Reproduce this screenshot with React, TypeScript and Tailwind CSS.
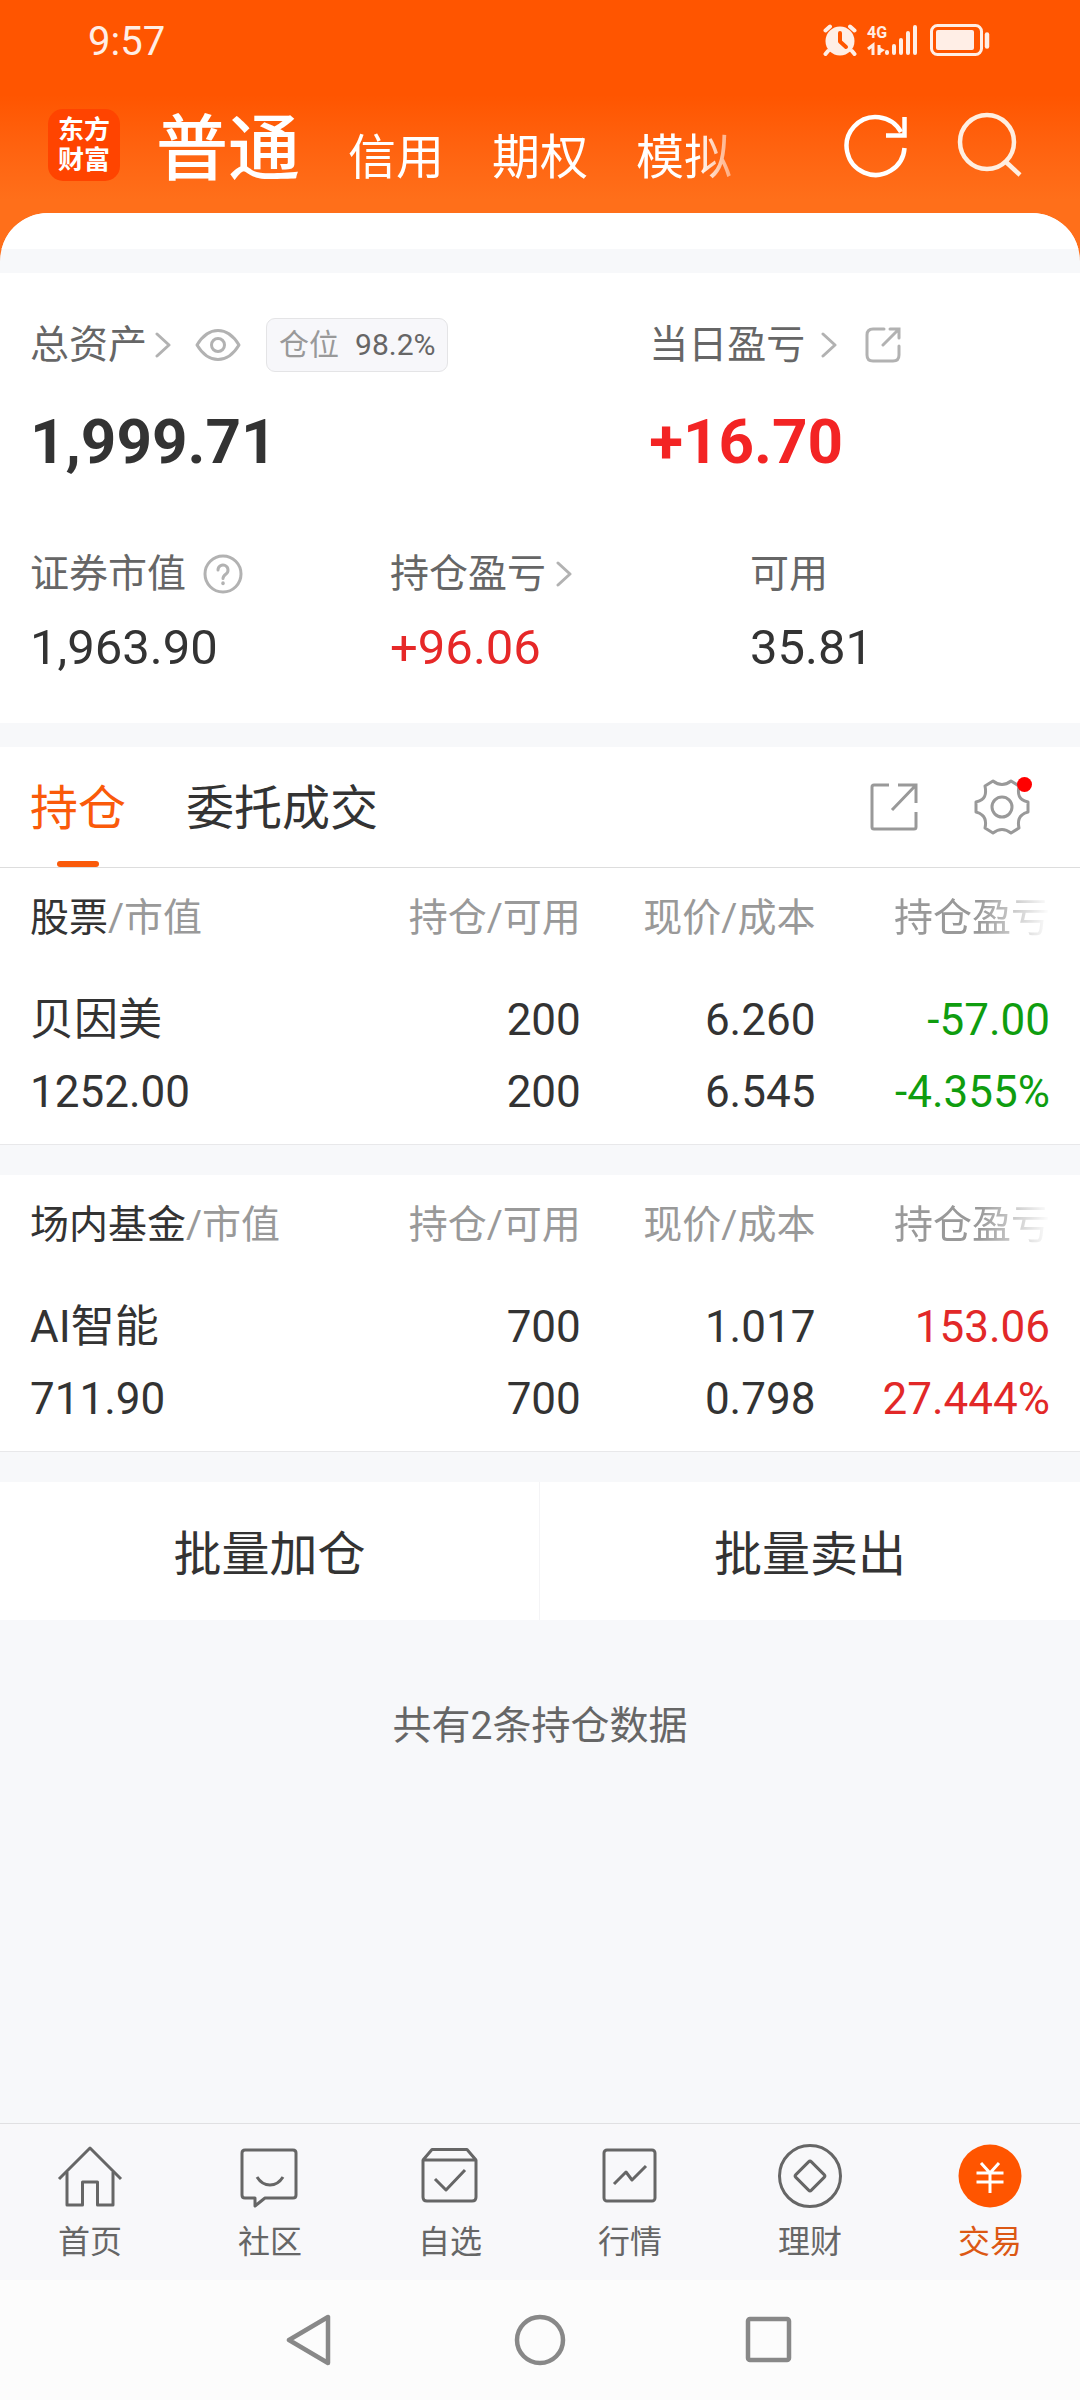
import type { ReactNode } from "react";

type Holding = {
  kind: string;
  name: string;
  value: string;
  amount: string;
  usable: string;
  price: string;
  cost: string;
  profit: string;
  rate: string;
  tone: "up" | "down";
};

const HOLDINGS: Holding[] = [
  {
    kind: "股票",
    name: "贝因美",
    value: "1252.00",
    amount: "200",
    usable: "200",
    price: "6.260",
    cost: "6.545",
    profit: "-57.00",
    rate: "-4.355%",
    tone: "down",
  },
  {
    kind: "场内基金",
    name: "AI智能",
    value: "711.90",
    amount: "700",
    usable: "700",
    price: "1.017",
    cost: "0.798",
    profit: "153.06",
    rate: "27.444%",
    tone: "up",
  },
];

const TONE = { up: "text-[#e22828]", down: "text-[#0f9d0f]" };

function StatusBar() {
  return (
    <div className="flex h-20 items-center justify-between pr-[90px] pl-[88px] text-[#ffeee6]">
      <span className="pt-1 text-[40px] leading-[48px]">9:57</span>
      <svg width="168" height="32" viewBox="0 0 168 32" fill="none" stroke="currentColor">
        {/* alarm */}
        <circle cx="18" cy="17" r="14.5" fill="currentColor" stroke="none" />
        <path d="M3.5 6.5 8 2.5M32.5 6.5 28 2.5M6 27l-2.5 3M30 27l2.5 3" strokeWidth="4" strokeLinecap="round" />
        <path d="M18 9v8.5l6 5.5" stroke="#ff5500" strokeWidth="4" strokeLinecap="round" strokeLinejoin="round" />
        {/* network */}
        <text x="45" y="14" fill="currentColor" stroke="none" fontSize="16" fontWeight="700">
          4G
        </text>
        <path d="M46 25l5-4v10M57 21v10" strokeWidth="3" />
        <path d="M57 23l6 3-6 4z" fill="currentColor" stroke="none" />
        <path d="M65 28v1M72 22v7M79 16v13M86 9v20M93 3v26" strokeWidth="4" strokeLinecap="round" />
        {/* battery */}
        <rect x="109.5" y="1.5" width="50" height="29" rx="6" strokeWidth="3" />
        <rect x="114" y="6" width="38" height="20" rx="2" fill="currentColor" stroke="none" />
        <path d="M165 10.5v12" strokeWidth="4.5" strokeLinecap="round" />
      </svg>
    </div>
  );
}

function Header() {
  return (
    <div className="flex h-[133px] items-start pr-[57px] pl-12 text-white">
      <div className="mt-[29px] flex h-[72px] w-[72px] flex-col items-center justify-center rounded-[15px] bg-[#ff4400] text-[26px] leading-[30px] font-bold">
        <span>东方</span>
        <span>财富</span>
      </div>
      <nav className="ml-9 flex w-[603px] items-baseline gap-12 overflow-hidden pt-1.5 text-[48px] leading-[66px] whitespace-nowrap [mask-image:linear-gradient(to_right,#000_541px,transparent_603px)]">
        <button className="mt-3 text-[72px] leading-[104px] font-medium">普通</button>
        <button>信用</button>
        <button>期权</button>
        <button>模拟</button>
      </nav>
      <div className="mt-8 ml-auto flex gap-12">
        <button aria-label="刷新">
          <svg width="66" height="66" viewBox="0 0 66 66" fill="none" stroke="currentColor" strokeWidth="4.5">
            <path d="M61.5 36A29 29 0 1 1 58 20" />
            <path d="M61.5 5v18.5H43" />
          </svg>
        </button>
        <button aria-label="搜索">
          <svg width="66" height="66" viewBox="0 0 66 66" fill="none" stroke="#ffeee0" strokeWidth="4.5">
            <circle cx="30" cy="30" r="27" />
            <path d="M49 50l14 13" />
          </svg>
        </button>
      </div>
    </div>
  );
}

function Chevron() {
  return (
    <svg width="16" height="26" viewBox="0 0 16 26" fill="none" stroke="#b2b2b2" strokeWidth="3" strokeLinecap="round" strokeLinejoin="round">
      <path d="M2 2l12 11L2 24" />
    </svg>
  );
}

function Metric({ label, value, tone, children }: { label: string; value: string; tone?: string; children?: ReactNode }) {
  return (
    <div>
      <div className="flex h-12 items-center text-[39px] leading-[48px] text-[#666]">
        {label}
        {children}
      </div>
      <div className={`mt-[18px] text-[49px] leading-[64px] ${tone ?? "text-[#333]"}`}>{value}</div>
    </div>
  );
}

function Assets() {
  return (
    <section className="bg-white px-[30px] py-[43px]">
      <div className="flex">
        <div className="w-[607px] grow-0 basis-[60.7%]">
          <div className="flex h-[58px] items-center text-[39px] leading-[48px] text-[#666]">
            总资产
            <span className="ml-2">
              <Chevron />
            </span>
            <button aria-label="隐藏金额" className="ml-6">
              <svg width="46" height="32" viewBox="0 0 46 32" fill="none" stroke="#b2b2b2" strokeWidth="3">
                <path d="M2 16C8 6 15 1.5 23 1.5S38 6 44 16C38 26 31 30.5 23 30.5S8 26 2 16z" strokeLinejoin="round" />
                <circle cx="23" cy="16" r="6.5" />
              </svg>
            </button>
            <span className="ml-[25px] flex h-[54px] items-center gap-4 rounded-[9px] border border-[#e4e4e6] bg-[#f7f7fa] px-3 text-[30px] leading-[40px]">
              <span className="text-[#999]">仓位</span>
              <span>98.2%</span>
            </span>
          </div>
          <div className="mt-8 text-[62px] leading-[72px] font-bold text-[#333]">1,999.71</div>
        </div>
        <div>
          <div className="flex h-[58px] items-center text-[39px] leading-[48px] text-[#666]">
            当日盈亏
            <span className="ml-4">
              <Chevron />
            </span>
            <button aria-label="分享当日盈亏" className="ml-7">
              <svg width="36" height="36" viewBox="0 0 36 36" fill="none" stroke="#b2b2b2" strokeWidth="3" strokeLinecap="round">
                <path d="M19 2H8Q2 2 2 8v20q0 6 6 6h20q6 0 6-6V19" />
                <path d="M25 2h9v9M34 2 18 18" />
              </svg>
            </button>
          </div>
          <div className="mt-8 text-[62px] leading-[72px] font-bold text-[#f32424]">+16.70</div>
        </div>
      </div>

      <div className="mt-[72px] grid grid-cols-[360px_360px_1fr]">
        <Metric label="证券市值" value="1,963.90">
          <svg className="ml-[17px]" width="40" height="40" viewBox="0 0 40 40" fill="none" stroke="#b2b2b2" strokeWidth="3" strokeLinecap="round">
            <circle cx="20" cy="20" r="18" />
            <path d="M15 16a5 5 0 1 1 8 4c-2 1.4-3 2.5-3 4.5" />
            <path d="M20 29v.5" strokeWidth="3.5" />
          </svg>
        </Metric>
        <Metric label="持仓盈亏" value="+96.06" tone="text-[#e62828]">
          <span className="ml-2.5">
            <Chevron />
          </span>
        </Metric>
        <Metric label="可用" value="35.81" />
      </div>
    </section>
  );
}

function Tabs() {
  return (
    <div className="flex h-[121px] items-center border-b border-[#ddd] bg-white pr-[50px] pl-[30px] text-[48px] text-[#333]">
      <button className="relative h-full pt-1 text-[#fa5a0a]">
        持仓
        <span className="absolute bottom-0 left-1/2 h-1.5 w-[42px] -translate-x-1/2 rounded-full bg-[#fa5a0a]" />
      </button>
      <button className="ml-[60px] h-full pt-1">委托成交</button>
      <button aria-label="分享持仓" className="ml-auto">
        <svg width="48" height="48" viewBox="0 0 48 48" fill="none" stroke="#999" strokeWidth="3">
          <path d="M19 2H4Q2 2 2 4v40q0 2 2 2h40q2 0 2-2V29" />
          <path d="M28 2h18v18M46 2 22 27" />
        </svg>
      </button>
      <button aria-label="设置" className="relative ml-[56px]">
        <svg width="56" height="56" viewBox="0 0 56 56" fill="none" stroke="#999" strokeWidth="3" strokeLinejoin="round">
          <path d="M19 2Q28 9 37 2L45 7Q43 17 48 20.5Q50 22 54 23V33Q50 34 48 36Q43 40 45 49L37 54Q28 47 19 54L11 49Q13 40 8 36Q6 34 2 33V23Q6 22 8 20.5Q13 17 11 7z" />
          <circle cx="28" cy="28" r="10" />
        </svg>
        <span className="absolute -top-0.5 -right-0.5 h-[15px] w-[15px] rounded-full bg-[#ff0000]" />
      </button>
    </div>
  );
}

function HoldingTable({ item }: { item: Holding }) {
  return (
    <div className="border-b border-[#e8e8ea] bg-white px-[30px]">
      <table className="w-full table-fixed text-right text-[44px] leading-[72px] text-[#333]">
        <thead>
          <tr className="h-[98px] text-[39px] leading-[48px] text-[#999]">
            <th className="pt-0.5 text-left font-normal">
              <span className="text-[#333]">{item.kind}</span>/市值
            </th>
            <th className="w-[23%] pt-0.5 font-normal">持仓/可用</th>
            <th className="w-[23%] pt-0.5 font-normal">现价/成本</th>
            <th className="w-[23%] pt-0.5 font-normal [mask-image:linear-gradient(to_right,#000_70%,transparent)]">持仓盈亏</th>
          </tr>
        </thead>
        <tbody>
          <tr>
            <td className="pt-[18px] pb-4 text-left">
              <div>{item.name}</div>
              <div>{item.value}</div>
            </td>
            <td className="pt-[18px] pb-4">
              <div>{item.amount}</div>
              <div>{item.usable}</div>
            </td>
            <td className="pt-[18px] pb-4">
              <div>{item.price}</div>
              <div>{item.cost}</div>
            </td>
            <td className={`pt-[18px] pb-4 ${TONE[item.tone]}`}>
              <div>{item.profit}</div>
              <div>{item.rate}</div>
            </td>
          </tr>
        </tbody>
      </table>
    </div>
  );
}

const NAV: { label: string; icon: ReactNode }[] = [
  {
    label: "首页",
    icon: (
      <>
        <path d="M2 34 33 3l31 31" />
        <path d="M10 27v33h15.500V37h15v23H56V27" />
      </>
    ),
  },
  {
    label: "社区",
    icon: (
      <>
        <path d="M8 5h48q3 0 3 3v42q0 3-3 3H28l-10 8v-8H8q-3 0-3-3V8q0-3 3-3z" />
        <path d="M20 32q5 8 13 8t13-8" />
      </>
    ),
  },
  {
    label: "自选",
    icon: (
      <>
        <path d="M6 15h53v37q0 4-4 4H10q-4 0-4-4zl9-10.500h35L59 15" />
        <path d="M18 34l11 11 19-20" />
      </>
    ),
  },
  {
    label: "行情",
    icon: (
      <>
        <rect x="7" y="5" width="51" height="51" rx="3" />
        <path d="M17 39l12-12 6 8 14-14" />
      </>
    ),
  },
  {
    label: "理财",
    icon: (
      <>
        <circle cx="33" cy="31" r="30.5" />
        <rect x="22" y="20" width="22" height="22" rx="2" transform="rotate(45 33 31)" />
      </>
    ),
  },
  {
    label: "交易",
    icon: (
      <>
        <circle cx="33" cy="31" r="31.5" fill="#ff5500" stroke="none" />
        <path d="M24 18l9 10 9-10M19.5 28h27M19.5 37h27M33 28v20" stroke="#fff" strokeWidth="3" />
      </>
    ),
  },
];

function BottomNav() {
  return (
    <nav className="mt-auto grid h-[157px] grid-cols-6 border-t border-[#e0e0e2] bg-[#f8f8fa]">
      {NAV.map((n) => (
        <a
          key={n.label}
          href="#"
          className={`flex flex-col items-center pt-5 text-[32px] leading-[40px] ${n.label === "交易" ? "text-[#dc5814]" : "text-[#666]"}`}
        >
          <svg width="66" height="66" viewBox="0 -1 66 66" fill="none" stroke="currentColor" strokeWidth="3" strokeLinejoin="round">
            {n.icon}
          </svg>
          <span className="mt-3">{n.label}</span>
        </a>
      ))}
    </nav>
  );
}

function SystemNav() {
  return (
    <div className="flex h-[120px] items-center justify-center gap-[178px] bg-[#fcfcfc] text-[#888]">
      <button aria-label="返回">
        <svg width="52" height="52" viewBox="0 0 52 52" fill="none" stroke="currentColor" strokeWidth="4.5" strokeLinejoin="round">
          <path d="M44 3v46L5 26z" />
        </svg>
      </button>
      <button aria-label="主屏幕">
        <svg width="52" height="52" viewBox="0 0 52 52" fill="none" stroke="currentColor" strokeWidth="4.5">
          <circle cx="26" cy="26" r="23" />
        </svg>
      </button>
      <button aria-label="最近任务">
        <svg width="52" height="52" viewBox="0 0 52 52" fill="none" stroke="currentColor" strokeWidth="4.5">
          <rect x="4" y="5" width="41" height="41" rx="2" />
        </svg>
      </button>
    </div>
  );
}

export default function App() {
  return (
    <div className="flex min-h-screen flex-col bg-[#f7f8fa] font-[Roboto,'Noto_Sans_CJK_SC',sans-serif]">
      <header className="bg-linear-to-b from-[#ff5500] from-[95px] to-[#ff6f1a] to-[200px]">
        <StatusBar />
        <Header />
        <div className="overflow-hidden rounded-t-[48px] bg-[#f7f8fa]">
          <div className="h-9 bg-white" />
          <div className="h-6" />
        </div>
      </header>

      <Assets />

      <section className="mt-6">
        <Tabs />
        <HoldingTable item={HOLDINGS[0]} />
      </section>
      <section className="mt-[30px]">
        <HoldingTable item={HOLDINGS[1]} />
      </section>

      <div className="mt-[30px] grid h-[138px] grid-cols-2 bg-white text-[48px] text-[#333]">
        <button className="border-r border-[#f4f4f6] pt-2">批量加仓</button>
        <button className="pt-2">批量卖出</button>
      </div>

      <p className="mt-[82px] text-center text-[39px] leading-[48px] text-[#666]">共有2条持仓数据</p>

      <BottomNav />
      <SystemNav />
    </div>
  );
}
